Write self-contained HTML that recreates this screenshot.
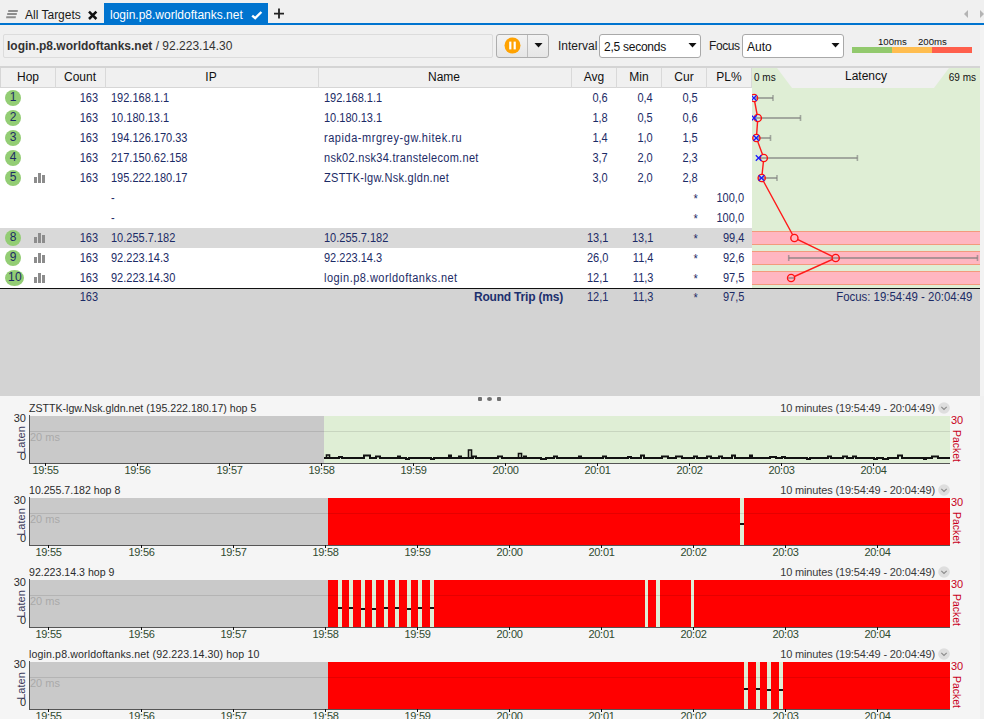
<!DOCTYPE html>
<html><head><meta charset="utf-8"><style>
html,body{margin:0;padding:0;width:984px;height:719px;overflow:hidden;background:#f0f0f0;font-family:"Liberation Sans", sans-serif;}
.t{position:absolute;white-space:nowrap;font-family:"Liberation Sans", sans-serif;}
.r{position:absolute;}
svg.r{overflow:visible}
</style></head><body>
<div class="r" style="left:0px;top:0px;width:984px;height:396px;background:#f0f0f0;"></div>
<div class="r" style="left:0px;top:396px;width:984px;height:323px;background:#f5f5f5;"></div>
<svg class="r" style="left:0px;top:0px" width="24" height="24" viewBox="0 0 24 24"><path d="M8.3 10 H17.9 L17.7 12 H8.1 Z M7.3 13.1 H16.9 L16.7 15.1 H7.1 Z M6.3 16.2 H15.9 L15.7 18.2 H6.1 Z" fill="#8d8d8d"/></svg>
<div class="t" style="left:25px;top:9px;font-size:12px;line-height:12px;color:#1a1a1a;font-weight:normal;">All Targets</div>
<svg class="r" style="left:87px;top:9px" width="12" height="12" viewBox="0 0 12 12"><path d="M2 2.6 L9.4 10 M9.4 2.6 L2 10" stroke="#111" stroke-width="2.5" stroke-linecap="butt"/></svg>
<div class="r" style="left:104px;top:3px;width:164px;height:21px;background:#0074cf;"></div>
<div class="t" style="left:110px;top:9px;font-size:12px;line-height:12px;color:#ffffff;font-weight:normal;">login.p8.worldoftanks.net</div>
<svg class="r" style="left:250px;top:8px" width="14" height="14" viewBox="0 0 14 14"><path d="M2.2 7.6 L5.2 10.2 L11.4 4.0" stroke="#fff" stroke-width="2.4" fill="none"/></svg>
<svg class="r" style="left:272px;top:7px" width="14" height="14" viewBox="0 0 14 14"><path d="M7 1.5 V11.5 M2 6.7 H12" stroke="#222" stroke-width="1.8"/></svg>
<div class="r" style="left:0px;top:23px;width:984px;height:2px;background:#0074cf;"></div>
<svg class="r" style="left:962px;top:9px" width="22" height="10" viewBox="0 0 22 10"><path d="M6 1 L2 5 L6 9 Z" fill="#b4b4b4"/><path d="M18 1 L22 5 L18 9 Z" fill="#b4b4b4"/></svg>
<div class="r" style="left:3px;top:34px;width:488px;height:22px;border:1px solid #dcdcdc;background:#f0f0f0;border-radius:2px"></div>
<div class="t" style="left:7px;top:40px;font-size:12px;line-height:12px;color:#333333;font-weight:normal;"><b>login.p8.worldoftanks.net</b> / 92.223.14.30</div>
<div class="r" style="left:496px;top:34px;width:51px;height:22px;border:1px solid #adadad;border-radius:3px;background:linear-gradient(#f3f3f3,#e6e6e6)"></div>
<div class="r" style="left:527px;top:35px;width:1px;height:22px;background:#bdbdbd;"></div>
<svg class="r" style="left:504px;top:37px" width="17" height="17" viewBox="0 0 17 17"><circle cx="8.5" cy="8.5" r="8" fill="#ffa200"/><rect x="5.2" y="4.6" width="2.2" height="7.8" fill="#fff"/><rect x="9.6" y="4.6" width="2.2" height="7.8" fill="#fff"/></svg>
<svg class="r" style="left:534px;top:43px" width="9" height="5" viewBox="0 0 9 5"><path d="M0.5 0 H8.5 L4.5 4.5 Z" fill="#111"/></svg>
<div class="t" style="left:558px;top:40px;font-size:12px;line-height:12px;color:#1a1a1a;font-weight:normal;">Interval</div>
<div class="r" style="left:599px;top:34px;width:100px;height:22px;border:1px solid #a9a9a9;border-radius:3px;background:#fff"></div>
<div class="t" style="left:604px;top:41px;font-size:12px;line-height:12px;color:#111;font-weight:normal;letter-spacing:-0.25px;">2,5 seconds</div>
<svg class="r" style="left:688px;top:43px" width="9" height="5" viewBox="0 0 9 5"><path d="M0.5 0 H8.5 L4.5 4.5 Z" fill="#111"/></svg>
<div class="t" style="left:709px;top:40px;font-size:12px;line-height:12px;color:#1a1a1a;font-weight:normal;letter-spacing:-0.4px;">Focus</div>
<div class="r" style="left:742px;top:34px;width:100px;height:22px;border:1px solid #a9a9a9;border-radius:3px;background:#fff"></div>
<div class="t" style="left:747px;top:41px;font-size:12px;line-height:12px;color:#111;font-weight:normal;">Auto</div>
<svg class="r" style="left:831px;top:43px" width="9" height="5" viewBox="0 0 9 5"><path d="M0.5 0 H8.5 L4.5 4.5 Z" fill="#111"/></svg>
<div class="t" style="left:878px;top:37px;font-size:9.6px;line-height:9.6px;color:#111;font-weight:normal;">100ms</div>
<div class="t" style="left:918px;top:37px;font-size:9.6px;line-height:9.6px;color:#111;font-weight:normal;">200ms</div>
<div class="r" style="left:852px;top:47px;width:40px;height:6px;background:#92c96d;"></div>
<div class="r" style="left:892px;top:47px;width:40px;height:6px;background:#ffbd4f;"></div>
<div class="r" style="left:932px;top:47px;width:40px;height:6px;background:#ff5f4c;"></div>
<div class="r" style="left:0px;top:66px;width:980px;height:2px;background:#d4d4d4;"></div>
<div class="r" style="left:0px;top:68px;width:752px;height:19px;background:#f0f0f0;"></div>
<div class="r" style="left:0px;top:87px;width:752px;height:1px;background:#d6d6d6;"></div>
<div class="r" style="left:0px;top:68px;width:1px;height:20px;background:#d6d6d6;"></div>
<div class="r" style="left:55px;top:68px;width:1px;height:20px;background:#d9d9d9;"></div>
<div class="r" style="left:105px;top:68px;width:1px;height:20px;background:#d9d9d9;"></div>
<div class="r" style="left:318px;top:68px;width:1px;height:20px;background:#d9d9d9;"></div>
<div class="r" style="left:571px;top:68px;width:1px;height:20px;background:#d9d9d9;"></div>
<div class="r" style="left:616px;top:68px;width:1px;height:20px;background:#d9d9d9;"></div>
<div class="r" style="left:661px;top:68px;width:1px;height:20px;background:#d9d9d9;"></div>
<div class="r" style="left:706px;top:68px;width:1px;height:20px;background:#d9d9d9;"></div>
<div class="r" style="left:751px;top:68px;width:1px;height:20px;background:#d9d9d9;"></div>
<div class="t" style="left:-122px;width:300px;text-align:center;top:71px;font-size:12px;line-height:12px;color:#111;font-weight:normal;">Hop</div>
<div class="t" style="left:-70px;width:300px;text-align:center;top:71px;font-size:12px;line-height:12px;color:#111;font-weight:normal;">Count</div>
<div class="t" style="left:61px;width:300px;text-align:center;top:71px;font-size:12px;line-height:12px;color:#111;font-weight:normal;">IP</div>
<div class="t" style="left:294px;width:300px;text-align:center;top:71px;font-size:12px;line-height:12px;color:#111;font-weight:normal;">Name</div>
<div class="t" style="left:444px;width:300px;text-align:center;top:71px;font-size:12px;line-height:12px;color:#111;font-weight:normal;">Avg</div>
<div class="t" style="left:489px;width:300px;text-align:center;top:71px;font-size:12px;line-height:12px;color:#111;font-weight:normal;">Min</div>
<div class="t" style="left:534px;width:300px;text-align:center;top:71px;font-size:12px;line-height:12px;color:#111;font-weight:normal;">Cur</div>
<div class="t" style="left:579px;width:300px;text-align:center;top:71px;font-size:12px;line-height:12px;color:#111;font-weight:normal;">PL%</div>
<div class="r" style="left:752px;top:68px;width:228px;height:20px;background:#dfeed5;"></div>
<svg class="r" style="left:752px;top:68px" width="228" height="20" viewBox="0 0 228 20"><path d="M25 0 H197 L182 20 H40 Z" fill="#f0f0f0"/></svg>
<div class="t" style="left:754px;top:73px;font-size:10px;line-height:10px;color:#111;font-weight:normal;">0 ms</div>
<div class="t" style="left:716px;width:300px;text-align:center;top:70px;font-size:12px;line-height:12px;color:#111;font-weight:normal;">Latency</div>
<div class="t" style="right:8px;top:73px;font-size:10px;line-height:10px;color:#111;font-weight:normal;">69 ms</div>
<div class="r" style="left:0px;top:88px;width:752px;height:200px;background:#ffffff;"></div>
<div class="r" style="left:752px;top:88px;width:228px;height:200px;background:#dfeed5;"></div>
<div class="r" style="left:0px;top:228px;width:752px;height:20px;background:#d9d9d9;"></div>
<div class="r" style="left:5px;top:90px;width:16px;height:16px;border-radius:50%;background:#93cd74"></div>
<div class="t" style="left:-137px;width:300px;text-align:center;top:91px;font-size:12px;line-height:12px;color:#1c2b66;font-weight:normal;">1</div>
<div class="t" style="right:886px;top:92px;font-size:12px;line-height:12px;color:#1c2b66;font-weight:normal;transform:scaleX(0.917);transform-origin:right top;">163</div>
<div class="t" style="left:111px;top:92px;font-size:12px;line-height:12px;color:#1c2b66;font-weight:normal;transform:scaleX(0.917);transform-origin:left top;">192.168.1.1</div>
<div class="t" style="left:324px;top:92px;font-size:12px;line-height:12px;color:#1c2b66;font-weight:normal;transform:scaleX(0.917);transform-origin:left top;letter-spacing:0px;">192.168.1.1</div>
<div class="t" style="right:376px;top:92px;font-size:12px;line-height:12px;color:#1c2b66;font-weight:normal;transform:scaleX(0.917);transform-origin:right top;">0,6</div>
<div class="t" style="right:331px;top:92px;font-size:12px;line-height:12px;color:#1c2b66;font-weight:normal;transform:scaleX(0.917);transform-origin:right top;">0,4</div>
<div class="t" style="right:286px;top:92px;font-size:12px;line-height:12px;color:#1c2b66;font-weight:normal;transform:scaleX(0.917);transform-origin:right top;">0,5</div>
<div class="r" style="left:5px;top:110px;width:16px;height:16px;border-radius:50%;background:#93cd74"></div>
<div class="t" style="left:-137px;width:300px;text-align:center;top:111px;font-size:12px;line-height:12px;color:#1c2b66;font-weight:normal;">2</div>
<div class="t" style="right:886px;top:112px;font-size:12px;line-height:12px;color:#1c2b66;font-weight:normal;transform:scaleX(0.917);transform-origin:right top;">163</div>
<div class="t" style="left:111px;top:112px;font-size:12px;line-height:12px;color:#1c2b66;font-weight:normal;transform:scaleX(0.917);transform-origin:left top;">10.180.13.1</div>
<div class="t" style="left:324px;top:112px;font-size:12px;line-height:12px;color:#1c2b66;font-weight:normal;transform:scaleX(0.917);transform-origin:left top;letter-spacing:0px;">10.180.13.1</div>
<div class="t" style="right:376px;top:112px;font-size:12px;line-height:12px;color:#1c2b66;font-weight:normal;transform:scaleX(0.917);transform-origin:right top;">1,8</div>
<div class="t" style="right:331px;top:112px;font-size:12px;line-height:12px;color:#1c2b66;font-weight:normal;transform:scaleX(0.917);transform-origin:right top;">0,5</div>
<div class="t" style="right:286px;top:112px;font-size:12px;line-height:12px;color:#1c2b66;font-weight:normal;transform:scaleX(0.917);transform-origin:right top;">0,6</div>
<div class="r" style="left:5px;top:130px;width:16px;height:16px;border-radius:50%;background:#93cd74"></div>
<div class="t" style="left:-137px;width:300px;text-align:center;top:131px;font-size:12px;line-height:12px;color:#1c2b66;font-weight:normal;">3</div>
<div class="t" style="right:886px;top:132px;font-size:12px;line-height:12px;color:#1c2b66;font-weight:normal;transform:scaleX(0.917);transform-origin:right top;">163</div>
<div class="t" style="left:111px;top:132px;font-size:12px;line-height:12px;color:#1c2b66;font-weight:normal;transform:scaleX(0.917);transform-origin:left top;">194.126.170.33</div>
<div class="t" style="left:324px;top:132px;font-size:12px;line-height:12px;color:#1c2b66;font-weight:normal;transform:scaleX(0.917);transform-origin:left top;letter-spacing:0.59px;">rapida-mrgrey-gw.hitek.ru</div>
<div class="t" style="right:376px;top:132px;font-size:12px;line-height:12px;color:#1c2b66;font-weight:normal;transform:scaleX(0.917);transform-origin:right top;">1,4</div>
<div class="t" style="right:331px;top:132px;font-size:12px;line-height:12px;color:#1c2b66;font-weight:normal;transform:scaleX(0.917);transform-origin:right top;">1,0</div>
<div class="t" style="right:286px;top:132px;font-size:12px;line-height:12px;color:#1c2b66;font-weight:normal;transform:scaleX(0.917);transform-origin:right top;">1,5</div>
<div class="r" style="left:5px;top:150px;width:16px;height:16px;border-radius:50%;background:#93cd74"></div>
<div class="t" style="left:-137px;width:300px;text-align:center;top:151px;font-size:12px;line-height:12px;color:#1c2b66;font-weight:normal;">4</div>
<div class="t" style="right:886px;top:152px;font-size:12px;line-height:12px;color:#1c2b66;font-weight:normal;transform:scaleX(0.917);transform-origin:right top;">163</div>
<div class="t" style="left:111px;top:152px;font-size:12px;line-height:12px;color:#1c2b66;font-weight:normal;transform:scaleX(0.917);transform-origin:left top;">217.150.62.158</div>
<div class="t" style="left:324px;top:152px;font-size:12px;line-height:12px;color:#1c2b66;font-weight:normal;transform:scaleX(0.917);transform-origin:left top;letter-spacing:0.33px;">nsk02.nsk34.transtelecom.net</div>
<div class="t" style="right:376px;top:152px;font-size:12px;line-height:12px;color:#1c2b66;font-weight:normal;transform:scaleX(0.917);transform-origin:right top;">3,7</div>
<div class="t" style="right:331px;top:152px;font-size:12px;line-height:12px;color:#1c2b66;font-weight:normal;transform:scaleX(0.917);transform-origin:right top;">2,0</div>
<div class="t" style="right:286px;top:152px;font-size:12px;line-height:12px;color:#1c2b66;font-weight:normal;transform:scaleX(0.917);transform-origin:right top;">2,3</div>
<div class="r" style="left:5px;top:170px;width:16px;height:16px;border-radius:50%;background:#93cd74"></div>
<div class="t" style="left:-137px;width:300px;text-align:center;top:171px;font-size:12px;line-height:12px;color:#1c2b66;font-weight:normal;">5</div>
<div class="r" style="left:34px;top:177px;width:3px;height:6px;background:#8c8c8c;"></div>
<div class="r" style="left:38px;top:173px;width:3px;height:10px;background:#8c8c8c;"></div>
<div class="r" style="left:42px;top:175px;width:3px;height:8px;background:#8c8c8c;"></div>
<div class="t" style="right:886px;top:172px;font-size:12px;line-height:12px;color:#1c2b66;font-weight:normal;transform:scaleX(0.917);transform-origin:right top;">163</div>
<div class="t" style="left:111px;top:172px;font-size:12px;line-height:12px;color:#1c2b66;font-weight:normal;transform:scaleX(0.917);transform-origin:left top;">195.222.180.17</div>
<div class="t" style="left:324px;top:172px;font-size:12px;line-height:12px;color:#1c2b66;font-weight:normal;transform:scaleX(0.917);transform-origin:left top;letter-spacing:0.32px;">ZSTTK-lgw.Nsk.gldn.net</div>
<div class="t" style="right:376px;top:172px;font-size:12px;line-height:12px;color:#1c2b66;font-weight:normal;transform:scaleX(0.917);transform-origin:right top;">3,0</div>
<div class="t" style="right:331px;top:172px;font-size:12px;line-height:12px;color:#1c2b66;font-weight:normal;transform:scaleX(0.917);transform-origin:right top;">2,0</div>
<div class="t" style="right:286px;top:172px;font-size:12px;line-height:12px;color:#1c2b66;font-weight:normal;transform:scaleX(0.917);transform-origin:right top;">2,8</div>
<div class="t" style="left:111px;top:192px;font-size:12px;line-height:12px;color:#1c2b66;font-weight:normal;transform:scaleX(0.917);transform-origin:left top;">-</div>
<div class="t" style="right:286px;top:193px;font-size:12px;line-height:12px;color:#1c2b66;font-weight:normal;transform:scaleX(0.917);transform-origin:right top;">*</div>
<div class="t" style="right:240px;top:192px;font-size:12px;line-height:12px;color:#1c2b66;font-weight:normal;transform:scaleX(0.917);transform-origin:right top;">100,0</div>
<div class="t" style="left:111px;top:212px;font-size:12px;line-height:12px;color:#1c2b66;font-weight:normal;transform:scaleX(0.917);transform-origin:left top;">-</div>
<div class="t" style="right:286px;top:213px;font-size:12px;line-height:12px;color:#1c2b66;font-weight:normal;transform:scaleX(0.917);transform-origin:right top;">*</div>
<div class="t" style="right:240px;top:212px;font-size:12px;line-height:12px;color:#1c2b66;font-weight:normal;transform:scaleX(0.917);transform-origin:right top;">100,0</div>
<div class="r" style="left:5px;top:230px;width:16px;height:16px;border-radius:50%;background:#93cd74"></div>
<div class="t" style="left:-137px;width:300px;text-align:center;top:231px;font-size:12px;line-height:12px;color:#1c2b66;font-weight:normal;">8</div>
<div class="r" style="left:34px;top:237px;width:3px;height:6px;background:#8c8c8c;"></div>
<div class="r" style="left:38px;top:233px;width:3px;height:10px;background:#8c8c8c;"></div>
<div class="r" style="left:42px;top:235px;width:3px;height:8px;background:#8c8c8c;"></div>
<div class="t" style="right:886px;top:232px;font-size:12px;line-height:12px;color:#1c2b66;font-weight:normal;transform:scaleX(0.917);transform-origin:right top;">163</div>
<div class="t" style="left:111px;top:232px;font-size:12px;line-height:12px;color:#1c2b66;font-weight:normal;transform:scaleX(0.917);transform-origin:left top;">10.255.7.182</div>
<div class="t" style="left:324px;top:232px;font-size:12px;line-height:12px;color:#1c2b66;font-weight:normal;transform:scaleX(0.917);transform-origin:left top;letter-spacing:0px;">10.255.7.182</div>
<div class="t" style="right:376px;top:232px;font-size:12px;line-height:12px;color:#1c2b66;font-weight:normal;transform:scaleX(0.917);transform-origin:right top;">13,1</div>
<div class="t" style="right:331px;top:232px;font-size:12px;line-height:12px;color:#1c2b66;font-weight:normal;transform:scaleX(0.917);transform-origin:right top;">13,1</div>
<div class="t" style="right:286px;top:233px;font-size:12px;line-height:12px;color:#1c2b66;font-weight:normal;transform:scaleX(0.917);transform-origin:right top;">*</div>
<div class="t" style="right:240px;top:232px;font-size:12px;line-height:12px;color:#1c2b66;font-weight:normal;transform:scaleX(0.917);transform-origin:right top;">99,4</div>
<div class="r" style="left:5px;top:250px;width:16px;height:16px;border-radius:50%;background:#93cd74"></div>
<div class="t" style="left:-137px;width:300px;text-align:center;top:251px;font-size:12px;line-height:12px;color:#1c2b66;font-weight:normal;">9</div>
<div class="r" style="left:34px;top:257px;width:3px;height:6px;background:#8c8c8c;"></div>
<div class="r" style="left:38px;top:253px;width:3px;height:10px;background:#8c8c8c;"></div>
<div class="r" style="left:42px;top:255px;width:3px;height:8px;background:#8c8c8c;"></div>
<div class="t" style="right:886px;top:252px;font-size:12px;line-height:12px;color:#1c2b66;font-weight:normal;transform:scaleX(0.917);transform-origin:right top;">163</div>
<div class="t" style="left:111px;top:252px;font-size:12px;line-height:12px;color:#1c2b66;font-weight:normal;transform:scaleX(0.917);transform-origin:left top;">92.223.14.3</div>
<div class="t" style="left:324px;top:252px;font-size:12px;line-height:12px;color:#1c2b66;font-weight:normal;transform:scaleX(0.917);transform-origin:left top;letter-spacing:0px;">92.223.14.3</div>
<div class="t" style="right:376px;top:252px;font-size:12px;line-height:12px;color:#1c2b66;font-weight:normal;transform:scaleX(0.917);transform-origin:right top;">26,0</div>
<div class="t" style="right:331px;top:252px;font-size:12px;line-height:12px;color:#1c2b66;font-weight:normal;transform:scaleX(0.917);transform-origin:right top;">11,4</div>
<div class="t" style="right:286px;top:253px;font-size:12px;line-height:12px;color:#1c2b66;font-weight:normal;transform:scaleX(0.917);transform-origin:right top;">*</div>
<div class="t" style="right:240px;top:252px;font-size:12px;line-height:12px;color:#1c2b66;font-weight:normal;transform:scaleX(0.917);transform-origin:right top;">92,6</div>
<div class="r" style="left:5px;top:270px;width:19px;height:16px;border-radius:50%;background:#93cd74"></div>
<div class="t" style="left:-135px;width:300px;text-align:center;top:271px;font-size:12px;line-height:12px;color:#1c2b66;font-weight:normal;letter-spacing:0.3px;">10</div>
<div class="r" style="left:34px;top:277px;width:3px;height:6px;background:#8c8c8c;"></div>
<div class="r" style="left:38px;top:273px;width:3px;height:10px;background:#8c8c8c;"></div>
<div class="r" style="left:42px;top:275px;width:3px;height:8px;background:#8c8c8c;"></div>
<div class="t" style="right:886px;top:272px;font-size:12px;line-height:12px;color:#1c2b66;font-weight:normal;transform:scaleX(0.917);transform-origin:right top;">163</div>
<div class="t" style="left:111px;top:272px;font-size:12px;line-height:12px;color:#1c2b66;font-weight:normal;transform:scaleX(0.917);transform-origin:left top;">92.223.14.30</div>
<div class="t" style="left:324px;top:272px;font-size:12px;line-height:12px;color:#1c2b66;font-weight:normal;transform:scaleX(0.917);transform-origin:left top;letter-spacing:0.52px;">login.p8.worldoftanks.net</div>
<div class="t" style="right:376px;top:272px;font-size:12px;line-height:12px;color:#1c2b66;font-weight:normal;transform:scaleX(0.917);transform-origin:right top;">12,1</div>
<div class="t" style="right:331px;top:272px;font-size:12px;line-height:12px;color:#1c2b66;font-weight:normal;transform:scaleX(0.917);transform-origin:right top;">11,3</div>
<div class="t" style="right:286px;top:273px;font-size:12px;line-height:12px;color:#1c2b66;font-weight:normal;transform:scaleX(0.917);transform-origin:right top;">*</div>
<div class="t" style="right:240px;top:272px;font-size:12px;line-height:12px;color:#1c2b66;font-weight:normal;transform:scaleX(0.917);transform-origin:right top;">97,5</div>
<svg class="r" style="left:752px;top:88px;overflow:hidden" width="228" height="200" viewBox="0 0 228 200"><rect x="0" y="143" width="228" height="14" fill="#ffb6c1"/><rect x="0" y="143" width="228" height="1" fill="#f39a7c"/><rect x="0" y="156" width="228" height="1" fill="#f39a7c"/><rect x="0" y="163" width="228" height="14" fill="#ffb6c1"/><rect x="0" y="163" width="228" height="1" fill="#f39a7c"/><rect x="0" y="176" width="228" height="1" fill="#f39a7c"/><rect x="0" y="183" width="228" height="14" fill="#ffb6c1"/><rect x="0" y="183" width="228" height="1" fill="#f39a7c"/><rect x="0" y="196" width="228" height="1" fill="#f39a7c"/><path d="M2.0 10 L5.8 30 L4.4 50 L11.8 70 L9.7 90 L42.4 150 L83.7 170 L39.1 190" stroke="#ff1a1a" stroke-width="1.4" fill="none"/><circle cx="2.0" cy="10" r="3.6" fill="#dfeed5"/><circle cx="5.8" cy="30" r="3.6" fill="#dfeed5"/><circle cx="4.4" cy="50" r="3.6" fill="#dfeed5"/><circle cx="11.8" cy="70" r="3.6" fill="#dfeed5"/><circle cx="9.7" cy="90" r="3.6" fill="#dfeed5"/><circle cx="42.4" cy="150" r="3.6" fill="#ffb6c1"/><circle cx="83.7" cy="170" r="3.6" fill="#ffb6c1"/><circle cx="39.1" cy="190" r="3.6" fill="#ffb6c1"/><path d="M1.3 10 H21.0" stroke="#7a7a7a" stroke-opacity="0.6" stroke-width="2" fill="none"/><path d="M21.0 7 V13" stroke="#7a7a7a" stroke-opacity="0.6" stroke-width="1.6" fill="none"/><path d="M1.6 30 H48.5" stroke="#7a7a7a" stroke-opacity="0.6" stroke-width="2" fill="none"/><path d="M48.5 27 V33" stroke="#7a7a7a" stroke-opacity="0.6" stroke-width="1.6" fill="none"/><path d="M3.3 50 H18.5" stroke="#7a7a7a" stroke-opacity="0.6" stroke-width="2" fill="none"/><path d="M18.5 47 V53" stroke="#7a7a7a" stroke-opacity="0.6" stroke-width="1.6" fill="none"/><path d="M6.6 70 H105.4" stroke="#7a7a7a" stroke-opacity="0.6" stroke-width="2" fill="none"/><path d="M105.4 67 V73" stroke="#7a7a7a" stroke-opacity="0.6" stroke-width="1.6" fill="none"/><path d="M6.6 90 H25.0" stroke="#7a7a7a" stroke-opacity="0.6" stroke-width="2" fill="none"/><path d="M25.0 87 V93" stroke="#7a7a7a" stroke-opacity="0.6" stroke-width="1.6" fill="none"/><path d="M36.7 170 H225.5" stroke="#7a7a7a" stroke-opacity="0.6" stroke-width="2" fill="none"/><path d="M225.5 167 V173" stroke="#7a7a7a" stroke-opacity="0.6" stroke-width="1.6" fill="none"/><path d="M36.7 167 V173" stroke="#7a7a7a" stroke-opacity="0.6" stroke-width="1.6" fill="none"/><path d="M36.3 190 H42.4" stroke="#7a7a7a" stroke-opacity="0.6" stroke-width="2" fill="none"/><circle cx="2.0" cy="10" r="3.6" fill="none" stroke="#ff1010" stroke-width="1.4"/><circle cx="5.8" cy="30" r="3.6" fill="none" stroke="#ff1010" stroke-width="1.4"/><circle cx="4.4" cy="50" r="3.6" fill="none" stroke="#ff1010" stroke-width="1.4"/><circle cx="11.8" cy="70" r="3.6" fill="none" stroke="#ff1010" stroke-width="1.4"/><circle cx="9.7" cy="90" r="3.6" fill="none" stroke="#ff1010" stroke-width="1.4"/><circle cx="42.4" cy="150" r="3.6" fill="none" stroke="#ff1010" stroke-width="1.4"/><circle cx="83.7" cy="170" r="3.6" fill="none" stroke="#ff1010" stroke-width="1.4"/><circle cx="39.1" cy="190" r="3.6" fill="none" stroke="#ff1010" stroke-width="1.4"/><path d="M-0.9999999999999998 7.2 L4.6 12.8 M4.6 7.2 L-0.9999999999999998 12.8" stroke="#1a1aff" stroke-width="1.3"/><path d="M-0.6999999999999997 27.2 L4.9 32.8 M4.9 27.2 L-0.6999999999999997 32.8" stroke="#1a1aff" stroke-width="1.3"/><path d="M1.4000000000000004 47.2 L7.0 52.8 M7.0 47.2 L1.4000000000000004 52.8" stroke="#1a1aff" stroke-width="1.3"/><path d="M3.8 67.2 L9.399999999999999 72.8 M9.399999999999999 67.2 L3.8 72.8" stroke="#1a1aff" stroke-width="1.3"/><path d="M6.7 87.2 L12.3 92.8 M12.3 87.2 L6.7 92.8" stroke="#1a1aff" stroke-width="1.3"/></svg>
<div class="r" style="left:0px;top:288px;width:980px;height:1px;background:#111111;"></div>
<div class="r" style="left:0px;top:289px;width:980px;height:107px;background:#d3d3d3;"></div>
<div class="t" style="right:886px;top:291px;font-size:12px;line-height:12px;color:#1c2b66;font-weight:normal;transform:scaleX(0.917);transform-origin:right top;">163</div>
<div class="t" style="right:421px;top:291px;font-size:12px;line-height:12px;color:#1c2f6e;font-weight:bold;letter-spacing:-0.2px;">Round Trip (ms)</div>
<div class="t" style="right:376px;top:291px;font-size:12px;line-height:12px;color:#1c2b66;font-weight:normal;transform:scaleX(0.917);transform-origin:right top;">12,1</div>
<div class="t" style="right:331px;top:291px;font-size:12px;line-height:12px;color:#1c2b66;font-weight:normal;transform:scaleX(0.917);transform-origin:right top;">11,3</div>
<div class="t" style="right:286px;top:292px;font-size:12px;line-height:12px;color:#1c2b66;font-weight:normal;transform:scaleX(0.917);transform-origin:right top;">*</div>
<div class="t" style="right:240px;top:291px;font-size:12px;line-height:12px;color:#1c2b66;font-weight:normal;transform:scaleX(0.917);transform-origin:right top;">97,5</div>
<div class="t" style="right:12px;top:291px;font-size:12px;line-height:12px;color:#1c2b66;font-weight:normal;transform:scaleX(0.95);transform-origin:right top;">Focus: 19:54:49 - 20:04:49</div>
<div class="r" style="left:478px;top:397px;width:4px;height:4px;background:#707070;border-radius:1px"></div>
<div class="r" style="left:487px;top:397px;width:5px;height:4px;background:#707070;border-radius:50%"></div>
<div class="r" style="left:497px;top:397px;width:4px;height:4px;background:#707070;border-radius:1px"></div>
<div class="t" style="left:29px;top:403px;font-size:10.6px;line-height:10.6px;color:#2b2b2b;font-weight:normal;">ZSTTK-lgw.Nsk.gldn.net (195.222.180.17) hop 5</div>
<div class="t" style="right:49px;top:403px;font-size:11px;line-height:11px;color:#3a3a3a;font-weight:normal;letter-spacing:-0.15px;">10 minutes (19:54:49 - 20:04:49)</div>
<svg class="r" style="left:938px;top:402px" width="12" height="12" viewBox="0 0 12 12"><circle cx="6" cy="6" r="5.8" fill="#dedede"/><path d="M3.3 4.8 L6 7.5 L8.7 4.8" stroke="#8a8a8a" stroke-width="1.1" fill="none"/></svg>
<div class="r" style="left:30px;top:416px;width:294px;height:47px;background:#c9c9c9;"></div>
<div class="r" style="left:324px;top:416px;width:626px;height:47px;background:#dfeed5;"></div>
<div class="r" style="left:30px;top:431px;width:920px;height:1px;background:rgba(0,0,0,0.10)"></div>
<div class="t" style="left:30px;top:432px;font-size:11px;line-height:11px;color:#a9a9a9;font-weight:normal;">20 ms</div>
<svg class="r" style="left:0px;top:0px" width="984" height="719" viewBox="0 0 984 719"><path d="M324 458 H324 V458 H339 H339 V457 H342 H342 V458 H364 H364 V455.5 H370 H370 V458 H376 H376 V456.5 H380 H380 V458 H398 H398 V456.5 H400 H400 V458 H406 H406 V459 H409 H409 V458 H431 H431 V459 H434 H434 V458 H449 H449 V455.5 H451 H451 V458 H459 H459 V456.5 H461 H461 V458 H473 H473 V456.5 H476 H476 V458 H498 H498 V456.5 H502 H502 V458 H524 H524 V456.5 H526 H526 V458 H541 H541 V459 H546 H546 V458 H554 H554 V456.5 H557 H557 V458 H579 H579 V456.5 H581 H581 V458 H603 H603 V456.5 H606 H606 V458 H628 H628 V457 H631 H631 V458 H641 H641 V455.5 H644 H644 V458 H662 H662 V456.5 H668 H668 V458 H676 H676 V456.5 H682 H682 V458 H694 H694 V456.5 H697 H697 V458 H707 H707 V456.5 H711 H711 V458 H719 H719 V456.5 H722 H722 V458 H732 H732 V455.5 H735 H735 V458 H750 H750 V455.5 H752 H752 V458 H770 H770 V457 H776 H776 V458 H782 H782 V457 H785 H785 V458 H807 H807 V459 H810 H810 V458 H828 H828 V456.5 H831 H831 V458 H843 H843 V456.5 H847 H847 V458 H853 H853 V456.5 H856 H856 V458 H874 H874 V459 H877 H877 V458 H883 H883 V459 H888 H888 V458 H898 H898 V455.5 H902 H902 V458 H924 H924 V459 H926 H926 V458 H932 H932 V456.5 H938 H938 V458 H950" stroke="#111" stroke-width="2" fill="none"/><path d="M326.5 458 V455 H329.5 V458" stroke="#111" stroke-width="1.6" fill="none"/><path d="M468.5 458 V450 H471.5 V458" stroke="#111" stroke-width="1.6" fill="none"/><path d="M518.5 458 V453.5 H521.5 V458" stroke="#111" stroke-width="1.6" fill="none"/></svg>
<div class="r" style="left:29px;top:415px;width:1px;height:49px;background:#555;"></div>
<div class="r" style="left:29px;top:463px;width:921px;height:1px;background:#555;"></div>
<div class="t" style="right:958px;top:413px;font-size:11px;line-height:11px;color:#2b2b2b;font-weight:normal;">30</div>
<div class="t" style="right:958px;top:451px;font-size:11px;line-height:11px;color:#2b2b2b;font-weight:normal;">0</div>
<div class="t" style="left:0px;top:435px;width:42px;text-align:center;font-size:11px;line-height:11px;color:#3a3a5a;transform:rotate(-90deg);transform-origin:21px 5px;left:0px">Laten</div>
<div class="t" style="left:951px;top:415px;font-size:11px;line-height:11px;color:#c8001c;font-weight:normal;">30</div>
<div class="t" style="left:936px;top:441px;width:42px;text-align:center;font-size:10.4px;line-height:11px;color:#c8001c;transform:rotate(90deg);transform-origin:21px 5px">Packet</div>
<div class="r" style="left:45px;top:463px;width:1px;height:3px;background:#111;"></div>
<div class="t" style="left:-104.5px;width:300px;text-align:center;top:465px;font-size:11px;line-height:11px;color:#2f4a2f;font-weight:normal;letter-spacing:-0.3px;">19:55</div>
<div class="r" style="left:137px;top:463px;width:1px;height:3px;background:#111;"></div>
<div class="t" style="left:-12.5px;width:300px;text-align:center;top:465px;font-size:11px;line-height:11px;color:#2f4a2f;font-weight:normal;letter-spacing:-0.3px;">19:56</div>
<div class="r" style="left:229px;top:463px;width:1px;height:3px;background:#111;"></div>
<div class="t" style="left:79.5px;width:300px;text-align:center;top:465px;font-size:11px;line-height:11px;color:#2f4a2f;font-weight:normal;letter-spacing:-0.3px;">19:57</div>
<div class="r" style="left:321px;top:463px;width:1px;height:3px;background:#111;"></div>
<div class="t" style="left:171.5px;width:300px;text-align:center;top:465px;font-size:11px;line-height:11px;color:#2f4a2f;font-weight:normal;letter-spacing:-0.3px;">19:58</div>
<div class="r" style="left:413px;top:463px;width:1px;height:3px;background:#111;"></div>
<div class="t" style="left:263.5px;width:300px;text-align:center;top:465px;font-size:11px;line-height:11px;color:#2f4a2f;font-weight:normal;letter-spacing:-0.3px;">19:59</div>
<div class="r" style="left:505px;top:463px;width:1px;height:3px;background:#111;"></div>
<div class="t" style="left:355.5px;width:300px;text-align:center;top:465px;font-size:11px;line-height:11px;color:#2f4a2f;font-weight:normal;letter-spacing:-0.3px;">20:00</div>
<div class="r" style="left:597px;top:463px;width:1px;height:3px;background:#111;"></div>
<div class="t" style="left:447.5px;width:300px;text-align:center;top:465px;font-size:11px;line-height:11px;color:#2f4a2f;font-weight:normal;letter-spacing:-0.3px;">20:01</div>
<div class="r" style="left:689px;top:463px;width:1px;height:3px;background:#111;"></div>
<div class="t" style="left:539.5px;width:300px;text-align:center;top:465px;font-size:11px;line-height:11px;color:#2f4a2f;font-weight:normal;letter-spacing:-0.3px;">20:02</div>
<div class="r" style="left:781px;top:463px;width:1px;height:3px;background:#111;"></div>
<div class="t" style="left:631.5px;width:300px;text-align:center;top:465px;font-size:11px;line-height:11px;color:#2f4a2f;font-weight:normal;letter-spacing:-0.3px;">20:03</div>
<div class="r" style="left:873px;top:463px;width:1px;height:3px;background:#111;"></div>
<div class="t" style="left:723.5px;width:300px;text-align:center;top:465px;font-size:11px;line-height:11px;color:#2f4a2f;font-weight:normal;letter-spacing:-0.3px;">20:04</div>
<div class="t" style="left:29px;top:485px;font-size:10.6px;line-height:10.6px;color:#2b2b2b;font-weight:normal;">10.255.7.182 hop 8</div>
<div class="t" style="right:49px;top:485px;font-size:11px;line-height:11px;color:#3a3a3a;font-weight:normal;letter-spacing:-0.15px;">10 minutes (19:54:49 - 20:04:49)</div>
<svg class="r" style="left:938px;top:484px" width="12" height="12" viewBox="0 0 12 12"><circle cx="6" cy="6" r="5.8" fill="#dedede"/><path d="M3.3 4.8 L6 7.5 L8.7 4.8" stroke="#8a8a8a" stroke-width="1.1" fill="none"/></svg>
<div class="r" style="left:30px;top:498px;width:298px;height:47px;background:#c9c9c9;"></div>
<div class="r" style="left:328px;top:498px;width:622px;height:47px;background:#ff0000;"></div>
<div class="r" style="left:740px;top:498px;width:4px;height:47px;background:#dfeed5;"></div>
<div class="r" style="left:30px;top:513px;width:920px;height:1px;background:rgba(0,0,0,0.10)"></div>
<div class="t" style="left:30px;top:514px;font-size:11px;line-height:11px;color:#a9a9a9;font-weight:normal;">20 ms</div>
<div class="r" style="left:740px;top:523px;width:4px;height:2px;background:#111;"></div>
<div class="r" style="left:29px;top:497px;width:1px;height:49px;background:#555;"></div>
<div class="r" style="left:29px;top:545px;width:921px;height:1px;background:#555;"></div>
<div class="t" style="right:958px;top:495px;font-size:11px;line-height:11px;color:#2b2b2b;font-weight:normal;">30</div>
<div class="t" style="right:958px;top:533px;font-size:11px;line-height:11px;color:#2b2b2b;font-weight:normal;">0</div>
<div class="t" style="left:0px;top:517px;width:42px;text-align:center;font-size:11px;line-height:11px;color:#3a3a5a;transform:rotate(-90deg);transform-origin:21px 5px;left:0px">Laten</div>
<div class="t" style="left:951px;top:497px;font-size:11px;line-height:11px;color:#c8001c;font-weight:normal;">30</div>
<div class="t" style="left:936px;top:523px;width:42px;text-align:center;font-size:10.4px;line-height:11px;color:#c8001c;transform:rotate(90deg);transform-origin:21px 5px">Packet</div>
<div class="r" style="left:48px;top:545px;width:1px;height:3px;background:#111;"></div>
<div class="t" style="left:-101.5px;width:300px;text-align:center;top:547px;font-size:11px;line-height:11px;color:#2f4a2f;font-weight:normal;letter-spacing:-0.3px;">19:55</div>
<div class="r" style="left:141px;top:545px;width:1px;height:3px;background:#111;"></div>
<div class="t" style="left:-8.5px;width:300px;text-align:center;top:547px;font-size:11px;line-height:11px;color:#2f4a2f;font-weight:normal;letter-spacing:-0.3px;">19:56</div>
<div class="r" style="left:233px;top:545px;width:1px;height:3px;background:#111;"></div>
<div class="t" style="left:83.5px;width:300px;text-align:center;top:547px;font-size:11px;line-height:11px;color:#2f4a2f;font-weight:normal;letter-spacing:-0.3px;">19:57</div>
<div class="r" style="left:325px;top:545px;width:1px;height:3px;background:#111;"></div>
<div class="t" style="left:175.5px;width:300px;text-align:center;top:547px;font-size:11px;line-height:11px;color:#2f4a2f;font-weight:normal;letter-spacing:-0.3px;">19:58</div>
<div class="r" style="left:417px;top:545px;width:1px;height:3px;background:#111;"></div>
<div class="t" style="left:267.5px;width:300px;text-align:center;top:547px;font-size:11px;line-height:11px;color:#2f4a2f;font-weight:normal;letter-spacing:-0.3px;">19:59</div>
<div class="r" style="left:509px;top:545px;width:1px;height:3px;background:#111;"></div>
<div class="t" style="left:359.5px;width:300px;text-align:center;top:547px;font-size:11px;line-height:11px;color:#2f4a2f;font-weight:normal;letter-spacing:-0.3px;">20:00</div>
<div class="r" style="left:601px;top:545px;width:1px;height:3px;background:#111;"></div>
<div class="t" style="left:451.5px;width:300px;text-align:center;top:547px;font-size:11px;line-height:11px;color:#2f4a2f;font-weight:normal;letter-spacing:-0.3px;">20:01</div>
<div class="r" style="left:693px;top:545px;width:1px;height:3px;background:#111;"></div>
<div class="t" style="left:543.5px;width:300px;text-align:center;top:547px;font-size:11px;line-height:11px;color:#2f4a2f;font-weight:normal;letter-spacing:-0.3px;">20:02</div>
<div class="r" style="left:785px;top:545px;width:1px;height:3px;background:#111;"></div>
<div class="t" style="left:635.5px;width:300px;text-align:center;top:547px;font-size:11px;line-height:11px;color:#2f4a2f;font-weight:normal;letter-spacing:-0.3px;">20:03</div>
<div class="r" style="left:877px;top:545px;width:1px;height:3px;background:#111;"></div>
<div class="t" style="left:727.5px;width:300px;text-align:center;top:547px;font-size:11px;line-height:11px;color:#2f4a2f;font-weight:normal;letter-spacing:-0.3px;">20:04</div>
<div class="t" style="left:29px;top:567px;font-size:10.6px;line-height:10.6px;color:#2b2b2b;font-weight:normal;">92.223.14.3 hop 9</div>
<div class="t" style="right:49px;top:567px;font-size:11px;line-height:11px;color:#3a3a3a;font-weight:normal;letter-spacing:-0.15px;">10 minutes (19:54:49 - 20:04:49)</div>
<svg class="r" style="left:938px;top:566px" width="12" height="12" viewBox="0 0 12 12"><circle cx="6" cy="6" r="5.8" fill="#dedede"/><path d="M3.3 4.8 L6 7.5 L8.7 4.8" stroke="#8a8a8a" stroke-width="1.1" fill="none"/></svg>
<div class="r" style="left:30px;top:580px;width:298px;height:47px;background:#c9c9c9;"></div>
<div class="r" style="left:328px;top:580px;width:622px;height:47px;background:#ff0000;"></div>
<div class="r" style="left:338px;top:580px;width:4px;height:47px;background:#dfeed5;"></div>
<div class="r" style="left:349px;top:580px;width:4px;height:47px;background:#dfeed5;"></div>
<div class="r" style="left:361px;top:580px;width:4px;height:47px;background:#dfeed5;"></div>
<div class="r" style="left:372px;top:580px;width:4px;height:47px;background:#dfeed5;"></div>
<div class="r" style="left:384px;top:580px;width:4px;height:47px;background:#dfeed5;"></div>
<div class="r" style="left:395px;top:580px;width:4px;height:47px;background:#dfeed5;"></div>
<div class="r" style="left:407px;top:580px;width:4px;height:47px;background:#dfeed5;"></div>
<div class="r" style="left:418px;top:580px;width:4px;height:47px;background:#dfeed5;"></div>
<div class="r" style="left:430px;top:580px;width:4px;height:47px;background:#dfeed5;"></div>
<div class="r" style="left:645px;top:580px;width:3px;height:47px;background:#dfeed5;"></div>
<div class="r" style="left:656px;top:580px;width:4px;height:47px;background:#dfeed5;"></div>
<div class="r" style="left:691px;top:580px;width:3px;height:47px;background:#dfeed5;"></div>
<div class="r" style="left:30px;top:595px;width:920px;height:1px;background:rgba(0,0,0,0.10)"></div>
<div class="t" style="left:30px;top:596px;font-size:11px;line-height:11px;color:#a9a9a9;font-weight:normal;">20 ms</div>
<div class="r" style="left:338px;top:607px;width:4px;height:2px;background:#111;"></div>
<div class="r" style="left:349px;top:607px;width:4px;height:2px;background:#111;"></div>
<div class="r" style="left:361px;top:608px;width:4px;height:2px;background:#111;"></div>
<div class="r" style="left:372px;top:608px;width:4px;height:2px;background:#111;"></div>
<div class="r" style="left:384px;top:607px;width:4px;height:2px;background:#111;"></div>
<div class="r" style="left:395px;top:607px;width:4px;height:2px;background:#111;"></div>
<div class="r" style="left:407px;top:608px;width:4px;height:2px;background:#111;"></div>
<div class="r" style="left:418px;top:607px;width:4px;height:2px;background:#111;"></div>
<div class="r" style="left:430px;top:607px;width:4px;height:2px;background:#111;"></div>
<div class="r" style="left:29px;top:579px;width:1px;height:49px;background:#555;"></div>
<div class="r" style="left:29px;top:627px;width:921px;height:1px;background:#555;"></div>
<div class="t" style="right:958px;top:577px;font-size:11px;line-height:11px;color:#2b2b2b;font-weight:normal;">30</div>
<div class="t" style="right:958px;top:615px;font-size:11px;line-height:11px;color:#2b2b2b;font-weight:normal;">0</div>
<div class="t" style="left:0px;top:599px;width:42px;text-align:center;font-size:11px;line-height:11px;color:#3a3a5a;transform:rotate(-90deg);transform-origin:21px 5px;left:0px">Laten</div>
<div class="t" style="left:951px;top:579px;font-size:11px;line-height:11px;color:#c8001c;font-weight:normal;">30</div>
<div class="t" style="left:936px;top:605px;width:42px;text-align:center;font-size:10.4px;line-height:11px;color:#c8001c;transform:rotate(90deg);transform-origin:21px 5px">Packet</div>
<div class="r" style="left:48px;top:627px;width:1px;height:3px;background:#111;"></div>
<div class="t" style="left:-101.5px;width:300px;text-align:center;top:629px;font-size:11px;line-height:11px;color:#2f4a2f;font-weight:normal;letter-spacing:-0.3px;">19:55</div>
<div class="r" style="left:141px;top:627px;width:1px;height:3px;background:#111;"></div>
<div class="t" style="left:-8.5px;width:300px;text-align:center;top:629px;font-size:11px;line-height:11px;color:#2f4a2f;font-weight:normal;letter-spacing:-0.3px;">19:56</div>
<div class="r" style="left:233px;top:627px;width:1px;height:3px;background:#111;"></div>
<div class="t" style="left:83.5px;width:300px;text-align:center;top:629px;font-size:11px;line-height:11px;color:#2f4a2f;font-weight:normal;letter-spacing:-0.3px;">19:57</div>
<div class="r" style="left:325px;top:627px;width:1px;height:3px;background:#111;"></div>
<div class="t" style="left:175.5px;width:300px;text-align:center;top:629px;font-size:11px;line-height:11px;color:#2f4a2f;font-weight:normal;letter-spacing:-0.3px;">19:58</div>
<div class="r" style="left:417px;top:627px;width:1px;height:3px;background:#111;"></div>
<div class="t" style="left:267.5px;width:300px;text-align:center;top:629px;font-size:11px;line-height:11px;color:#2f4a2f;font-weight:normal;letter-spacing:-0.3px;">19:59</div>
<div class="r" style="left:509px;top:627px;width:1px;height:3px;background:#111;"></div>
<div class="t" style="left:359.5px;width:300px;text-align:center;top:629px;font-size:11px;line-height:11px;color:#2f4a2f;font-weight:normal;letter-spacing:-0.3px;">20:00</div>
<div class="r" style="left:601px;top:627px;width:1px;height:3px;background:#111;"></div>
<div class="t" style="left:451.5px;width:300px;text-align:center;top:629px;font-size:11px;line-height:11px;color:#2f4a2f;font-weight:normal;letter-spacing:-0.3px;">20:01</div>
<div class="r" style="left:693px;top:627px;width:1px;height:3px;background:#111;"></div>
<div class="t" style="left:543.5px;width:300px;text-align:center;top:629px;font-size:11px;line-height:11px;color:#2f4a2f;font-weight:normal;letter-spacing:-0.3px;">20:02</div>
<div class="r" style="left:785px;top:627px;width:1px;height:3px;background:#111;"></div>
<div class="t" style="left:635.5px;width:300px;text-align:center;top:629px;font-size:11px;line-height:11px;color:#2f4a2f;font-weight:normal;letter-spacing:-0.3px;">20:03</div>
<div class="r" style="left:877px;top:627px;width:1px;height:3px;background:#111;"></div>
<div class="t" style="left:727.5px;width:300px;text-align:center;top:629px;font-size:11px;line-height:11px;color:#2f4a2f;font-weight:normal;letter-spacing:-0.3px;">20:04</div>
<div class="t" style="left:29px;top:649px;font-size:10.6px;line-height:10.6px;color:#2b2b2b;font-weight:normal;letter-spacing:0.13px;">login.p8.worldoftanks.net (92.223.14.30) hop 10</div>
<div class="t" style="right:49px;top:649px;font-size:11px;line-height:11px;color:#3a3a3a;font-weight:normal;letter-spacing:-0.15px;">10 minutes (19:54:49 - 20:04:49)</div>
<svg class="r" style="left:938px;top:648px" width="12" height="12" viewBox="0 0 12 12"><circle cx="6" cy="6" r="5.8" fill="#dedede"/><path d="M3.3 4.8 L6 7.5 L8.7 4.8" stroke="#8a8a8a" stroke-width="1.1" fill="none"/></svg>
<div class="r" style="left:30px;top:662px;width:298px;height:47px;background:#c9c9c9;"></div>
<div class="r" style="left:328px;top:662px;width:622px;height:47px;background:#ff0000;"></div>
<div class="r" style="left:744px;top:662px;width:4px;height:47px;background:#dfeed5;"></div>
<div class="r" style="left:756px;top:662px;width:4px;height:47px;background:#dfeed5;"></div>
<div class="r" style="left:767px;top:662px;width:4px;height:47px;background:#dfeed5;"></div>
<div class="r" style="left:779px;top:662px;width:4px;height:47px;background:#dfeed5;"></div>
<div class="r" style="left:30px;top:677px;width:920px;height:1px;background:rgba(0,0,0,0.10)"></div>
<div class="t" style="left:30px;top:678px;font-size:11px;line-height:11px;color:#a9a9a9;font-weight:normal;">20 ms</div>
<div class="r" style="left:744px;top:688px;width:4px;height:2px;background:#111;"></div>
<div class="r" style="left:756px;top:688px;width:4px;height:2px;background:#111;"></div>
<div class="r" style="left:767px;top:689px;width:4px;height:2px;background:#111;"></div>
<div class="r" style="left:779px;top:689px;width:4px;height:2px;background:#111;"></div>
<div class="r" style="left:29px;top:661px;width:1px;height:49px;background:#555;"></div>
<div class="r" style="left:29px;top:709px;width:921px;height:1px;background:#555;"></div>
<div class="t" style="right:958px;top:659px;font-size:11px;line-height:11px;color:#2b2b2b;font-weight:normal;">30</div>
<div class="t" style="right:958px;top:697px;font-size:11px;line-height:11px;color:#2b2b2b;font-weight:normal;">0</div>
<div class="t" style="left:0px;top:681px;width:42px;text-align:center;font-size:11px;line-height:11px;color:#3a3a5a;transform:rotate(-90deg);transform-origin:21px 5px;left:0px">Laten</div>
<div class="t" style="left:951px;top:661px;font-size:11px;line-height:11px;color:#c8001c;font-weight:normal;">30</div>
<div class="t" style="left:936px;top:687px;width:42px;text-align:center;font-size:10.4px;line-height:11px;color:#c8001c;transform:rotate(90deg);transform-origin:21px 5px">Packet</div>
<div class="r" style="left:48px;top:709px;width:1px;height:3px;background:#111;"></div>
<div class="t" style="left:-101.5px;width:300px;text-align:center;top:711px;font-size:11px;line-height:11px;color:#2f4a2f;font-weight:normal;letter-spacing:-0.3px;">19:55</div>
<div class="r" style="left:141px;top:709px;width:1px;height:3px;background:#111;"></div>
<div class="t" style="left:-8.5px;width:300px;text-align:center;top:711px;font-size:11px;line-height:11px;color:#2f4a2f;font-weight:normal;letter-spacing:-0.3px;">19:56</div>
<div class="r" style="left:233px;top:709px;width:1px;height:3px;background:#111;"></div>
<div class="t" style="left:83.5px;width:300px;text-align:center;top:711px;font-size:11px;line-height:11px;color:#2f4a2f;font-weight:normal;letter-spacing:-0.3px;">19:57</div>
<div class="r" style="left:325px;top:709px;width:1px;height:3px;background:#111;"></div>
<div class="t" style="left:175.5px;width:300px;text-align:center;top:711px;font-size:11px;line-height:11px;color:#2f4a2f;font-weight:normal;letter-spacing:-0.3px;">19:58</div>
<div class="r" style="left:417px;top:709px;width:1px;height:3px;background:#111;"></div>
<div class="t" style="left:267.5px;width:300px;text-align:center;top:711px;font-size:11px;line-height:11px;color:#2f4a2f;font-weight:normal;letter-spacing:-0.3px;">19:59</div>
<div class="r" style="left:509px;top:709px;width:1px;height:3px;background:#111;"></div>
<div class="t" style="left:359.5px;width:300px;text-align:center;top:711px;font-size:11px;line-height:11px;color:#2f4a2f;font-weight:normal;letter-spacing:-0.3px;">20:00</div>
<div class="r" style="left:601px;top:709px;width:1px;height:3px;background:#111;"></div>
<div class="t" style="left:451.5px;width:300px;text-align:center;top:711px;font-size:11px;line-height:11px;color:#2f4a2f;font-weight:normal;letter-spacing:-0.3px;">20:01</div>
<div class="r" style="left:693px;top:709px;width:1px;height:3px;background:#111;"></div>
<div class="t" style="left:543.5px;width:300px;text-align:center;top:711px;font-size:11px;line-height:11px;color:#2f4a2f;font-weight:normal;letter-spacing:-0.3px;">20:02</div>
<div class="r" style="left:785px;top:709px;width:1px;height:3px;background:#111;"></div>
<div class="t" style="left:635.5px;width:300px;text-align:center;top:711px;font-size:11px;line-height:11px;color:#2f4a2f;font-weight:normal;letter-spacing:-0.3px;">20:03</div>
<div class="r" style="left:877px;top:709px;width:1px;height:3px;background:#111;"></div>
<div class="t" style="left:727.5px;width:300px;text-align:center;top:711px;font-size:11px;line-height:11px;color:#2f4a2f;font-weight:normal;letter-spacing:-0.3px;">20:04</div>
<div class="r" style="left:980px;top:25px;width:4px;height:371px;background:#f3f3f3"></div>
<div class="r" style="left:980px;top:396px;width:4px;height:323px;background:#f0f0f0;"></div>
</body></html>
